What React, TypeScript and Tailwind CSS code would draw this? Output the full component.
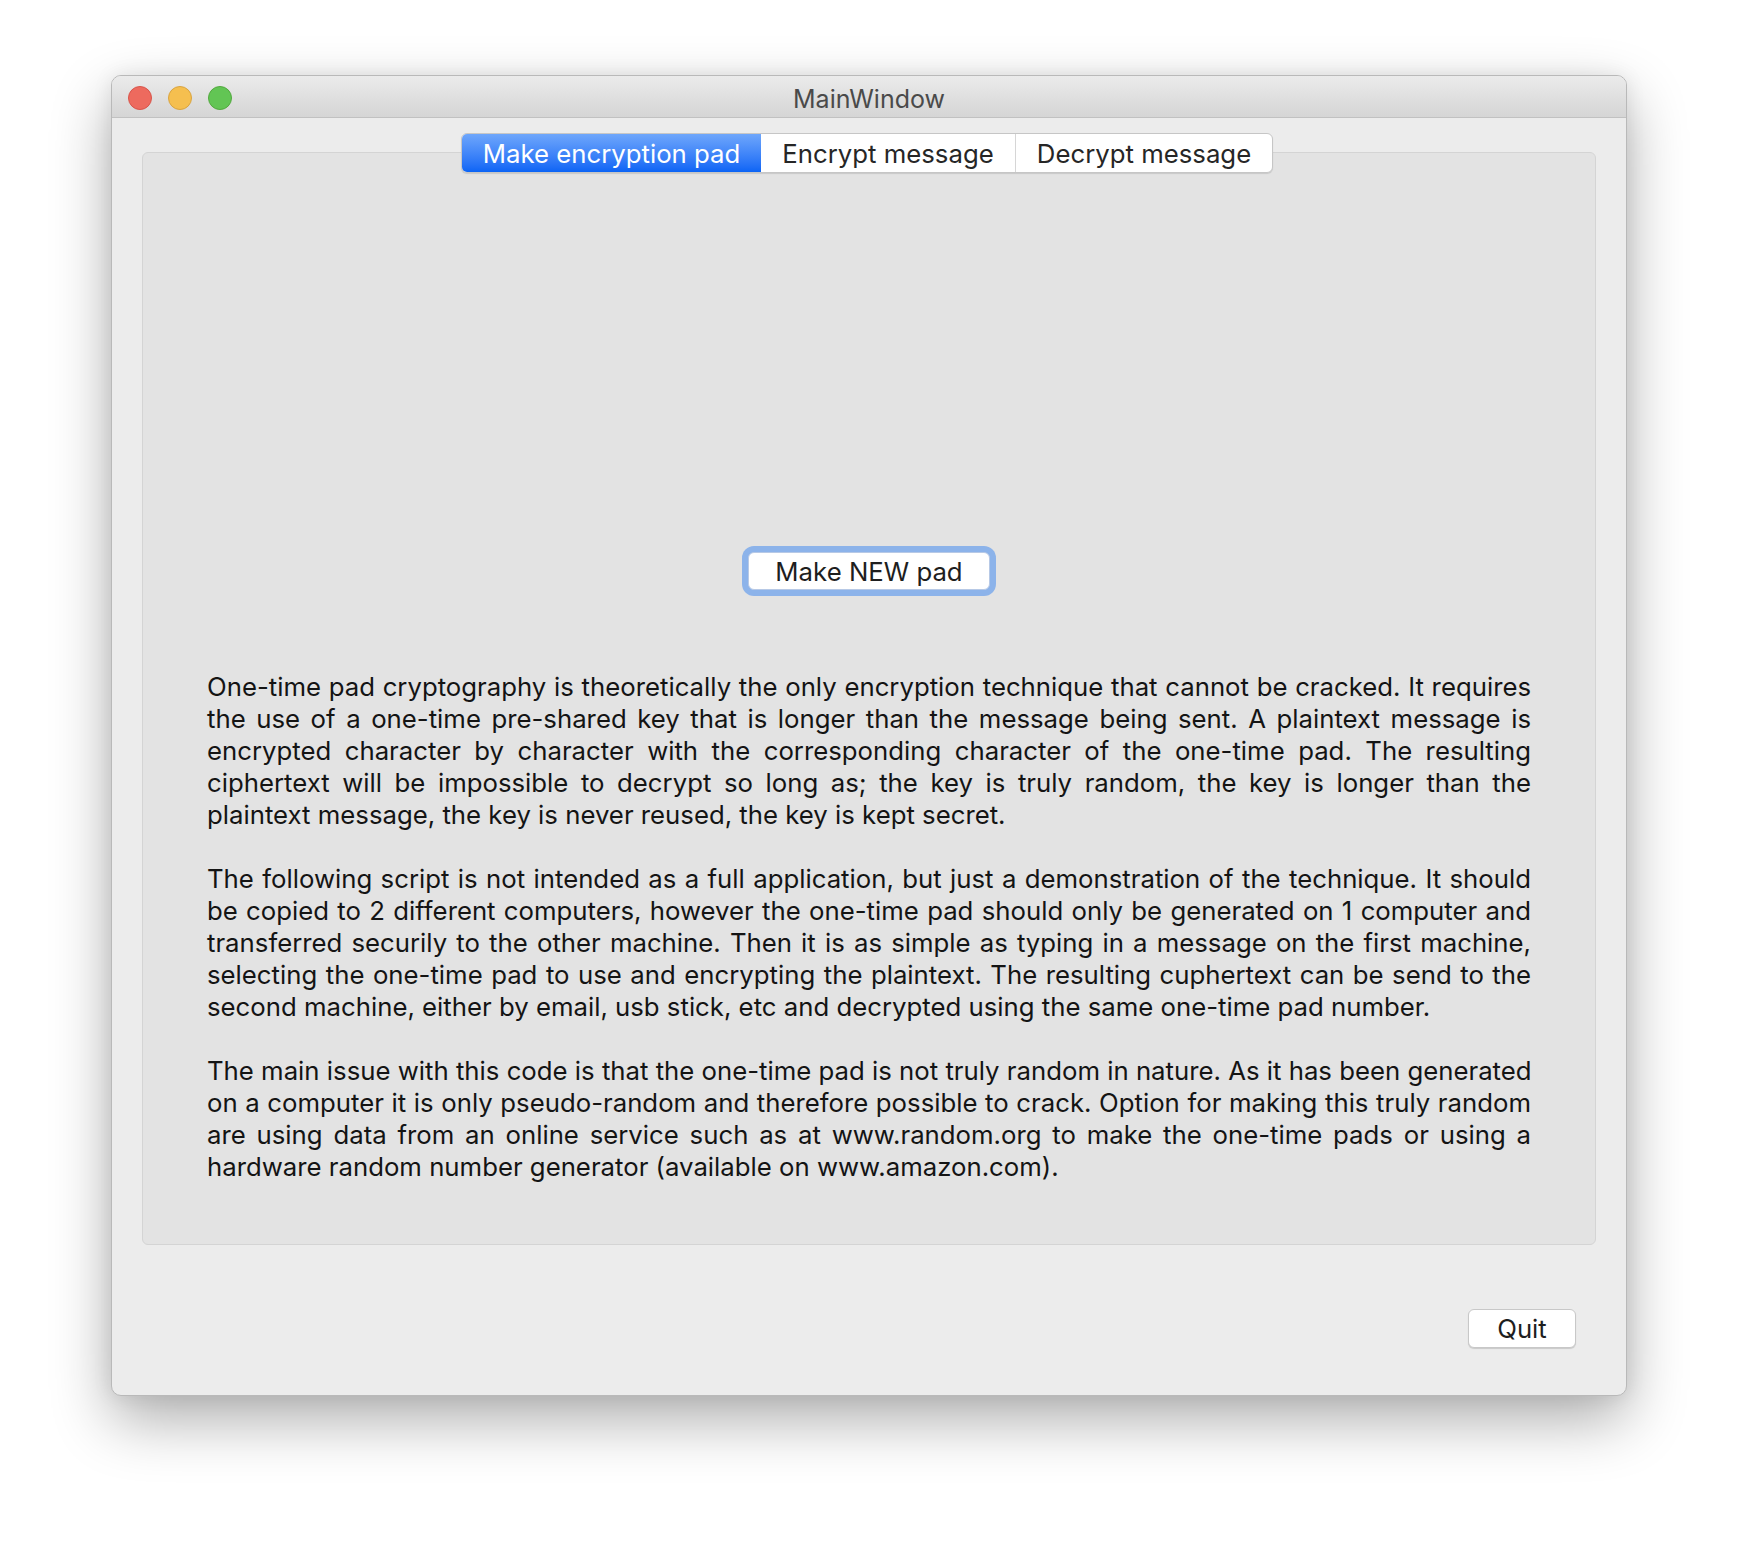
const font = "font-['Inter','Liberation_Sans',sans-serif]";

const paragraphs: string[][] = [
  [
    "One-time pad cryptography is theoretically the only encryption technique that cannot be cracked. It requires",
    "the use of a one-time pre-shared key that is longer than the message being sent. A plaintext message is",
    "encrypted character by character with the corresponding character of the one-time pad. The resulting",
    "ciphertext will be impossible to decrypt so long as; the key is truly random, the key is longer than the",
    "plaintext message, the key is never reused, the key is kept secret.",
  ],
  [
    "The following script is not intended as a full application, but just a demonstration of the technique. It should",
    "be copied to 2 different computers, however the one-time pad should only be generated on 1 computer and",
    "transferred securily to the other machine. Then it is as simple as typing in a message on the first machine,",
    "selecting the one-time pad to use and encrypting the plaintext. The resulting cuphertext can be send to the",
    "second machine, either by email, usb stick, etc and decrypted using the same one-time pad number.",
  ],
  [
    "The main issue with this code is that the one-time pad is not truly random in nature. As it has been generated",
    "on a computer it is only pseudo-random and therefore possible to crack. Option for making this truly random",
    "are using data from an online service such as at www.random.org to make the one-time pads or using a",
    "hardware random number generator (available on www.amazon.com).",
  ],
];

function TrafficLights() {
  return (
    <div className="flex items-center gap-[16px] pl-[16px]">
      <span className="w-[24px] h-[24px] rounded-full bg-[#ed6a5e] border border-[#d8554b]" />
      <span className="w-[24px] h-[24px] rounded-full bg-[#f5bf4f] border border-[#d9a441]" />
      <span className="w-[24px] h-[24px] rounded-full bg-[#62c554] border border-[#53a93f]" />
    </div>
  );
}

export default function App() {
  return (
    <div className={`w-[1738px] h-[1544px] bg-white pt-[75px] pl-[111px] ${font}`}>
      <div className="w-[1516px] h-[1321px] rounded-[10px] bg-[#ececec] border border-[#b9b9b9] overflow-hidden shadow-[0_24px_60px_rgba(0,0,0,0.32),0_0_20px_rgba(0,0,0,0.08)] flex flex-col">
        {/* title bar */}
        <div className="h-[42px] shrink-0 grid grid-cols-[1fr_auto_1fr] items-center pt-[2px] bg-gradient-to-b from-[#ebebeb] to-[#d5d5d5] border-b border-[#c1c1c1]">
          <TrafficLights />
          <div className="pt-[3px] text-[25px] text-[#4a4a4a] leading-none">MainWindow</div>
          <div />
        </div>

        <div className="flex flex-col px-[30px] pt-[15px]">
          {/* tabs */}
          <div className="relative z-10 flex justify-center h-[40px] -ml-[4px]">
            <div className="flex rounded-[6px] border border-[#c6c6c6] bg-white overflow-hidden shadow-[0_1px_1px_rgba(0,0,0,0.12)] text-[25.75px] leading-none">
              <div className="w-[299px] pt-[2px] flex items-center justify-center text-white bg-gradient-to-b from-[#6ea6fb] to-[#0a64f5]">
                Make encryption pad
              </div>
              <div className="w-[255px] pt-[2px] flex items-center justify-center text-[#262626] border-r border-[#d6d6d6]">
                Encrypt message
              </div>
              <div className="w-[256px] pt-[2px] flex items-center justify-center text-[#262626]">
                Decrypt message
              </div>
            </div>
          </div>

          {/* tab pane */}
          <div className="-mt-[21px] h-[1093px] rounded-[6px] bg-[#e3e3e3] border border-[#d4d4d4] flex flex-col px-[64px] pt-[399px]">
            <div className="flex justify-center">
              <button className="w-[242px] h-[38px] pt-[1px] rounded-[6px] bg-white border border-[#b7c9e6] shadow-[0_0_0_6px_#8cb3ea] text-[25.75px] text-[#1e1e1e] leading-none">
                Make NEW pad
              </button>
            </div>

            <div className="mt-[81px] flex flex-col gap-[32px] text-[25.75px] leading-[32px] text-[#141414]">
              {paragraphs.map((lines, i) => (
                <div key={i}>
                  {lines.map((line, j) => (
                    <div
                      key={j}
                      className={
                        j < lines.length - 1
                          ? "text-justify [text-align-last:justify] whitespace-nowrap"
                          : "whitespace-nowrap"
                      }
                    >
                      {line}
                    </div>
                  ))}
                </div>
              ))}
            </div>
          </div>

          {/* quit */}
          <div className="flex justify-end mt-[64px] pr-[20px]">
            <button className="w-[108px] h-[39px] pt-[1px] rounded-[6px] bg-white border border-[#c8c8c8] shadow-[0_1px_1px_rgba(0,0,0,0.15)] text-[25.75px] text-[#1e1e1e] leading-none">
              Quit
            </button>
          </div>
        </div>
      </div>
    </div>
  );
}
